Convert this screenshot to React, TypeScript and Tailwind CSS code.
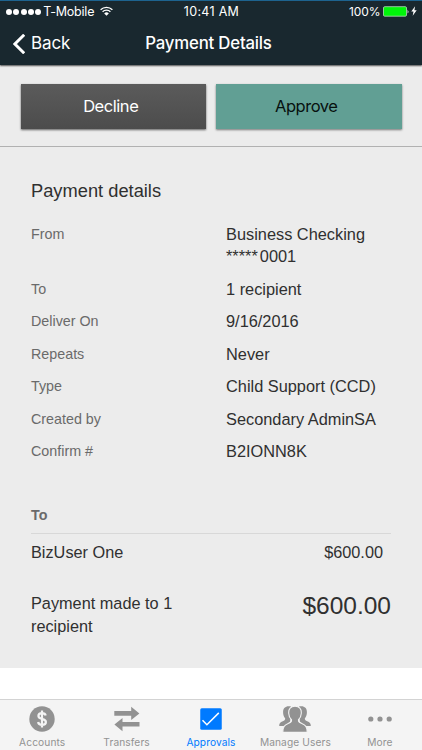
import clsx from "clsx";
import type { ReactNode } from "react";

type Detail = { label: string; lines: ReactNode[] };

const details: Detail[] = [
  {
    label: "From",
    lines: [
      "Business Checking",
      <>
        <span className="mr-0.5">*****</span>0001
      </>,
    ],
  },
  { label: "To", lines: ["1 recipient"] },
  { label: "Deliver On", lines: ["9/16/2016"] },
  { label: "Repeats", lines: ["Never"] },
  { label: "Type", lines: ["Child Support (CCD)"] },
  { label: "Created by", lines: ["Secondary AdminSA"] },
  { label: "Confirm #", lines: ["B2IONN8K"] },
];

const StatusBar = () => (
  <div className="grid h-[22px] grid-cols-[1fr_auto_1fr] items-center text-[12.5px] leading-none">
    <div className="flex items-center pl-1.5">
      <div className="flex gap-[1.3px]">
        {[0, 1, 2, 3, 4].map((dot) => (
          <span className="size-1.5 rounded-full bg-white" key={dot} />
        ))}
      </div>
      <span className="ml-[2px] tracking-[-0.2px]">T-Mobile</span>
      <svg
        className="ml-[6px] h-[10px] w-[13px] -translate-y-px"
        viewBox="0 0 13 10"
      >
        <g fill="none" stroke="white" strokeWidth="1.3">
          <path d="M0.6 3.7a8.4 8.4 0 0 1 11.8 0" />
          <path d="M2.6 5.8a5.5 5.5 0 0 1 7.8 0" />
        </g>
        <path d="M4.2 7.4a3.3 3.3 0 0 1 4.6 0L6.5 9.8z" fill="white" />
      </svg>
    </div>
    <span className="pl-px tracking-[0.3px]">10:41 AM</span>
    <div className="flex items-center justify-end pr-[5px]">
      <span className="mr-[2px] text-[12px] tracking-[-0.1px]">100%</span>
      <svg className="h-[11px] w-[27px] -translate-y-px" viewBox="0 0 27 11">
        <rect
          fill="#00f50a"
          height="9.5"
          rx="1.2"
          stroke="#b7d8bd"
          strokeWidth="0.8"
          width="23"
          x="0.5"
          y="0.7"
        />
        <path d="M24.6 3.4q1.6 2 0 4z" fill="white" />
      </svg>
      <svg
        className="ml-[1.5px] h-[10px] w-[6px] -translate-y-px"
        viewBox="0 0 6 10"
      >
        <path d="M4.1 0.2 0.3 5.5h2.2L1.7 9.8 5.7 4.2H3.4z" fill="white" />
      </svg>
    </div>
  </div>
);

const Header = () => (
  <header className="relative h-[65px] shrink-0 border-[#1d638f] border-t bg-[#19282f] text-white shadow-[0_1px_1.5px_rgba(0,0,0,0.65)]">
    <StatusBar />
    <div className="grid h-[41px] grid-cols-[1fr_auto_1fr] items-center text-[17px] tracking-[-0.1px]">
      <div className="flex items-center pl-[13px]">
        <svg className="h-5 w-3" viewBox="0 0 12 20">
          <path
            d="M11.2 0.8 1.9 10 11.2 19.2"
            fill="none"
            stroke="white"
            strokeWidth="3"
          />
        </svg>
        <span className="ml-1.5">Back</span>
      </div>
      <h1 className="mr-[5px] font-medium text-[16.8px] tracking-[-0.2px]">
        Payment Details
      </h1>
    </div>
  </header>
);

const DetailRow = ({ label, lines }: Detail) => (
  <div className="flex leading-[22.5px]">
    <dt className="w-[195px] text-[#6a6a6a] text-[14.3px]">{label}</dt>
    <dd className="text-[16.35px]">
      {lines.map((line, index) => (
        <div key={index}>{line}</div>
      ))}
    </dd>
  </div>
);

const AccountsIcon = () => (
  <svg className="size-[26px]" viewBox="0 0 26 26">
    <circle cx="13" cy="13" fill="currentColor" r="12.7" />
    <path
      d="M16.7 9.6C16.3 8 14.9 7.2 13 7.2c-2.1 0-3.6 1-3.6 2.7 0 4.1 7.5 1.9 7.5 6.1 0 1.8-1.5 2.9-3.8 2.9-2.2 0-3.7-1-4-2.9M13 4.6v16.8"
      fill="none"
      stroke="#f4f4f4"
      strokeWidth="2.2"
    />
  </svg>
);

const TransfersIcon = () => (
  <svg className="size-[26px]" fill="currentColor" viewBox="0 0 26 26">
    <path d="M0.3 4.9h16.9V0.7L25.4 7.4l-8.2 6.5V9.8H0.3z" />
    <path d="M25.5 20.6H8.5v4.6L0.4 18.4l8.1-6.5v4.1h17z" />
  </svg>
);

const ApprovalsIcon = () => (
  <svg className="size-[22px]" viewBox="0 0 22 22">
    <rect
      fill="currentColor"
      height="21.5"
      rx="1.5"
      width="21.5"
      x="0.25"
      y="0.25"
    />
    <path
      d="m2.5 12.3 4.4 4.4L18.8 4.9"
      fill="none"
      stroke="white"
      strokeWidth="1.5"
    />
  </svg>
);

const UsersIcon = () => (
  <svg className="h-[26px] w-8" fill="currentColor" viewBox="0 0 32 26">
    <path d="M12 0.6C7.4-0.7 4 1.7 4.1 6.2c0 2.6 0.6 4.4 2 6 0.3 1.700-0.5 2.300-2.300 3.100C1.200 16.300 0.200 17.200 0.200 20H11z" />
    <path d="M20 0.6c4.6-1.3 8 1.1 7.9 5.6 0 2.6-0.6 4.4-2 6-0.3 1.700 0.5 2.300 2.300 3.100 2.600 1 3.600 1.900 3.600 4.700H21z" />
    <path
      d="M16 0.300c4.300 0 6.600 2.700 6.300 7-0.100 2.800-1.100 4.900-2.800 6.400-0.300 1.900 0.500 2.700 3.300 3.800 3.700 1.500 5.400 3.200 5.400 8.900H3.800c0-5.700 1.700-7.400 5.400-8.900 2.800-1.100 3.600-1.900 3.300-3.800-1.700-1.500-2.700-3.600-2.800-6.400C9.400 3 11.700 0.300 16 0.300z"
      stroke="#f4f4f4"
      strokeWidth="1.100"
    />
  </svg>
);

const MoreIcon = () => (
  <svg className="h-[26px] w-6" fill="currentColor" viewBox="0 0 24 26">
    <circle cx="2.8" cy="13" r="2.6" />
    <circle cx="12" cy="13" r="2.6" />
    <circle cx="21.2" cy="13" r="2.6" />
  </svg>
);

const tabs: { label: string; icon: ReactNode; active?: boolean }[] = [
  { label: "Accounts", icon: <AccountsIcon /> },
  { label: "Transfers", icon: <TransfersIcon /> },
  { label: "Approvals", icon: <ApprovalsIcon />, active: true },
  { label: "Manage Users", icon: <UsersIcon /> },
  { label: "More", icon: <MoreIcon /> },
];

const TabBar = () => (
  <nav className="grid h-[51px] shrink-0 grid-cols-5 border-[#d3d3d3] border-t bg-[#f4f4f4] pt-[5px]">
    {tabs.map(({ label, icon, active }) => (
      <button
        className={clsx(
          "flex flex-col items-center whitespace-nowrap text-[10.2px] leading-3 tracking-[0.1px]",
          active ? "text-[#007aff]" : "text-[#929292]"
        )}
        key={label}
        type="button"
      >
        <span className="flex h-[27px] items-center">{icon}</span>
        <span className="mt-1">{label}</span>
      </button>
    ))}
  </nav>
);

export default function App() {
  return (
    <div className="flex h-[750px] w-[422px] flex-col overflow-hidden bg-white font-['Inter',sans-serif]">
      <Header />
      <main className="h-[603px] shrink-0 bg-[#ececec] font-['Liberation_Sans',Arial,sans-serif] text-[#303030]">
        <div className="flex h-[82px] gap-[10px] border-[#b1b1b1] border-b pt-[19px] pl-[20.5px] font-['Inter',sans-serif] text-[16.5px] tracking-[-0.45px]">
          <button
            className="h-[45px] w-[185.5px] bg-linear-to-b from-[#5b5b5b] to-[#4c4c4c] pr-[5px] text-white shadow-[0_1px_2px_rgba(0,0,0,0.6)]"
            type="button"
          >
            Decline
          </button>
          <button
            className="h-[45px] w-[185.5px] bg-[#619f94] pr-[5px] text-[#07110f] shadow-[0_1px_2px_rgba(0,0,0,0.5)]"
            type="button"
          >
            Approve
          </button>
        </div>
        <section className="px-[31px] pt-8">
          <h2 className="text-[18.3px] leading-6">Payment details</h2>
          <dl className="mt-[19.5px] flex flex-col gap-2.5">
            {details.map((detail) => (
              <DetailRow key={detail.label} {...detail} />
            ))}
          </dl>
          <h3 className="mt-[41.5px] h-[30px] border-[#d8d8d8] border-b font-bold text-[#6a6a6a] text-[14.3px] leading-[22px]">
            To
          </h3>
          <div className="mt-[7px] flex justify-between pr-2 text-[16.3px] leading-[22.5px]">
            <span>BizUser One</span>
            <span>$600.00</span>
          </div>
          <div className="mt-[28.5px] flex justify-between text-[16.3px] leading-[22.5px]">
            <p className="w-[160px]">Payment made to 1 recipient</p>
            <strong className="font-normal text-[24.5px] leading-[27px]">
              $600.00
            </strong>
          </div>
        </section>
      </main>
      <div className="flex-1" />
      <TabBar />
    </div>
  );
}
